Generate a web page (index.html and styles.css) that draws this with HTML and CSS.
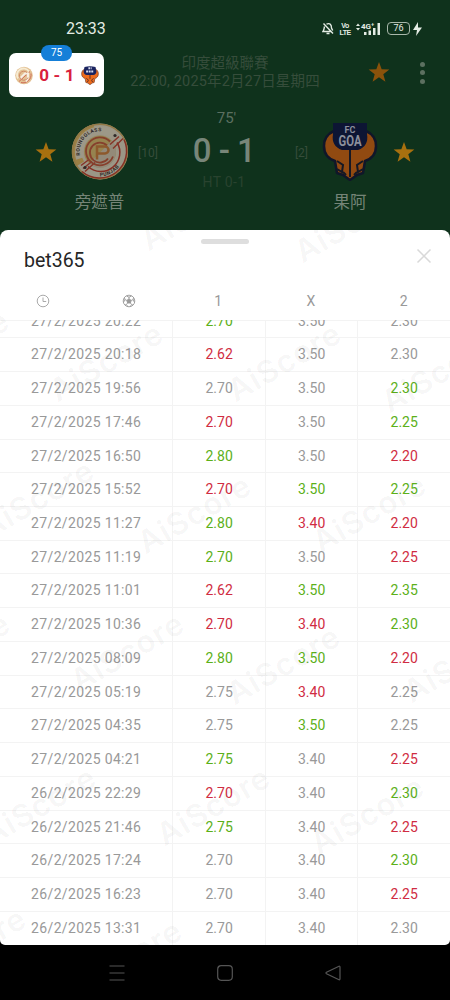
FILE: index.html
```
<!DOCTYPE html>
<html lang="zh-Hant">
<head>
    <meta charset="UTF-8">
    <meta name="viewport" content="width=device-width, initial-scale=1.0">
    <title>bet365</title>
    <link rel="stylesheet" href="styles.css">
</head>
<body>

    <svg width="0" height="0" class="defs">
        <symbol id="star" viewBox="0 0 24 24">
            <path d="M12 1l2.9 7.9 8.4.3-6.600 5.200 2.300 8.100-7-4.700-7 4.700 2.300-8.100L.7 9.200l8.400-.3z"/>
        </symbol>
        <symbol id="punjab" viewBox="0 0 58 58">
            <circle cx="29" cy="29" r="28" fill="#9b9686"/>
            <path d="M5 44A28 28 0 0 1 22 2l4 8A19 19 0 0 0 13 39z" fill="#9c8045"/>
            <path d="M9 36A21.500 21.500 0 0 1 42 12" fill="none" stroke="#9d9888" stroke-width="8"/>
            <circle cx="29" cy="29" r="27.300" fill="none" stroke="#927947" stroke-width="1.500"/>
            <path d="M53 17A27 27 0 0 1 11 49M46 20A19 19 0 0 1 17 44" fill="none" stroke="#862f24" stroke-width="1.500"/>
            <circle cx="29" cy="29" r="16" fill="#96834f"/>
            <path d="M45 29A16 16 0 0 1 18 41L41 18A16 16 0 0 1 45 29z" fill="#938a79"/>
            <path d="M52 16L42 26M48 14L39 22M24 40L14 49M21 39L12 46M18 37L10 43" stroke="#863427" stroke-width="1.500"/>
            <path d="M39 19A14 14 0 1 0 42 34M36 23A10 10 0 1 0 37 36" fill="none" stroke="#86402d" stroke-width="1.800"/>
            <path d="M26 37V24h8a3.500 3.500 0 0 1 0 7h-8" fill="none" stroke="#8d592c" stroke-width="2.500"/>
            <path id="arc-top" d="M9 33A20.500 20.500 0 0 1 41 12.500" fill="none"/>
            <path id="arc-bottom" d="M29 54A25 25 0 0 0 53 33" fill="none"/>
            <text class="crest-text"><textPath href="#arc-top">ROUNDGLASS</textPath></text>
            <text class="crest-text"><textPath href="#arc-bottom">PUNJAB</textPath></text>
            <circle cx="44" cy="13" r="1.600" fill="#302a29"/>
            <circle cx="14" cy="45" r="1.600" fill="#302a29"/>
        </symbol>
        <symbol id="goa" viewBox="0 0 54 59">
            <path d="M11 9C4 12 1 18 1 24c0 9 5 13 11 15l2 12 6 2 7 5 7-5 6-2 2-12c6-2 11-6 11-15 0-6-3-12-10-15z" fill="#914a11" stroke="#101629" stroke-width="2.500" stroke-linejoin="round"/>
            <path d="M10 1h34v11q2 12-9 16H19Q8 24 10 12z" fill="#0d1534"/>
            <path d="M27 28v27M14 39l6 4-1 7-5-3M40 39l-6 4 1 7 5-3M20 50l3 3M34 50l-3 3" fill="none" stroke="#151824" stroke-width="2"/>
            <text x="27" y="10.500" class="goa-fc">FC</text>
            <text x="27" y="24" class="goa-name" textLength="23" lengthAdjust="spacingAndGlyphs">GOA</text>
        </symbol>
    </svg>

    <div class="phone">
        <header class="header">
            <div class="status-bar">
                <span class="time">23:33</span>
                <div class="status-icons">
                    <svg width="12" height="13" viewBox="0 0 12 13" fill="none" stroke="#e4ece4" stroke-width="1.400">
                        <path d="M4.500 2.200C8 .500 9.500 3 9.500 6l1.200 2.500M2.500 4.500C2 7 2 8 1 9.500h8.500M4.500 11.500h3M1.500 1.500l9.500 10"/>
                    </svg>
                    <span class="volte"><span>Vo</span><span>LTE</span></span>
                    <svg width="25" height="14" viewBox="0 0 25 14" fill="#e4ece4">
                        <path d="M0 4l2-2.500L4 4zM0 6h4L2 8.500zM8 10h2.500v3H8zM12.500 8.500H15V13h-2.500zM17 6h2.500v7H17zM21.500 1H24v12h-2.500z"/>
                        <text x="5" y="7" class="net">4G⁺</text>
                    </svg>
                    <span class="battery">76</span>
                    <svg width="9" height="14" viewBox="0 0 9 14" fill="#e4ece4"><path d="M5 0L0 8h4l-1 6 6-8.500H5z"/></svg>
                </div>
            </div>

            <div class="title-bar">
                <div class="league">
                    <div class="league-name">印度超級聯賽</div>
                    <div class="league-date">22:00, 2025年2月27日星期四</div>
                </div>
                <svg class="star title-star"><use href="#star"/></svg>
                <div class="more"><i></i><i></i><i></i></div>
            </div>

            <div class="match">
                <svg class="star"><use href="#star"/></svg>
                <div class="team">
                    <svg class="logo"><use href="#punjab"/></svg>
                    <span class="team-name">旁遮普</span>
                </div>
                <span class="rank">[10]</span>
                <div class="score">
                    <span class="minute">75'</span>
                    <span class="goals">0 - 1</span>
                    <span class="half">HT 0-1</span>
                </div>
                <span class="rank">[2]</span>
                <div class="team">
                    <svg class="logo"><use href="#goa"/></svg>
                    <span class="team-name">果阿</span>
                </div>
                <svg class="star"><use href="#star"/></svg>
            </div>

            <!-- floating live score -->
            <div class="floating">
                <span class="floating-minute">75</span>
                <svg class="mini-logo" viewBox="0 0 18 18">
                    <circle cx="9" cy="9" r="8.800" fill="#e3c193"/>
                    <path d="M3 12a6.500 6.500 0 0 1 11-7" fill="none" stroke="#f6ead2" stroke-width="2"/>
                    <path d="M4 15L15 5M16 7A8 8 0 0 1 6 16" stroke="#d0705c" fill="none"/>
                    <path d="M5 12l5-5h3v4l-2 4" fill="none" stroke="#f7eee4" stroke-width="2"/>
                    <path d="M12 6a4.500 4.500 0 1 0 1 5" stroke="#cf8a68" fill="none"/>
                </svg>
                <span class="floating-score">0 - 1</span>
                <svg class="mini-logo" viewBox="0 0 54 59">
                    <path d="M11 9C4 12 1 18 1 24c0 9 5 13 11 15l2 12 6 2 7 5 7-5 6-2 2-12c6-2 11-6 11-15 0-6-3-12-10-15z" fill="#ef6c1c" stroke="#6f3823" stroke-width="2"/>
                    <path d="M10 3Q27-1 44 3l3 15q-1 9-10 10H17Q8 27 7 18z" fill="#1a2460"/>
                    <path d="M22 7h10M15 17h24" stroke="#dcdff0" stroke-width="6" stroke-dasharray="6 2"/>
                    <path d="M27 28v12M16 38l6 6-3 6M38 38l-6 6 3 6" fill="none" stroke="#59302b" stroke-width="3"/>
                </svg>
            </div>
        </header>

        <main class="sheet">
            <div class="handle"></div>
            <div class="sheet-title">
                <h1>bet365</h1>
                <svg width="16" height="16" viewBox="0 0 16 16" fill="none" stroke="#d9d9d9" stroke-width="1.500"><path d="M1.500 1.500l13 13M14.500 1.500l-13 13"/></svg>
            </div>
            <div class="columns">
                <span class="col-icon">
                    <svg width="14" height="14" viewBox="0 0 14 14" fill="none" stroke="#aaa"><circle cx="7" cy="7" r="5.800"/><path d="M7 3.500V7.500h3.200"/></svg>
                </span>
                <span class="col-icon">
                    <svg width="14" height="14" viewBox="0 0 14 14" fill="none" stroke="#999" stroke-width=".9"><circle cx="7" cy="7" r="5.800"/><path d="M7 4.800L9.200 6.400 8.400 9H5.600L4.800 6.400z" fill="#999"/><path d="M7 4.800V3M9.200 6.400l2-.8M8.400 9l1.300 1.600M5.600 9l-1.300 1.600M4.800 6.400l-2-.8M4.500 2L7 3.200 9.500 2M1.500 8.500l1.300-2.900L2.500 3.500M12.500 8.500l-1.300-2.900.3-2.100M3 11.200l1.300-.6L6 12.700M11 11.200l-1.300-.6L8 12.700"/></svg>
                </span>
                <span>1</span>
                <span>X</span>
                <span>2</span>
            </div>
            <div class="odds">
                <div class="odds-list" id="odds-list"></div>
            </div>
            <svg class="watermarks" id="watermarks" width="450" height="715"></svg>
        </main>

        <nav class="nav-bar">
            <svg width="16" height="16" viewBox="0 0 16 16"><path d="M.5 1h15M.5 8h15M.5 15h15"/></svg>
            <svg width="16" height="16" viewBox="0 0 16 16"><rect x=".7" y=".7" width="14.600" height="14.600" rx="3.500"/></svg>
            <svg width="16" height="16" viewBox="0 0 16 16"><path d="M14 1.200L1.500 7.300q-1 .7 0 1.400L14 14.800q1 .3 1-1V2.200q0-1.300-1-1z"/></svg>
        </nav>
    </div>

    <script>
        // "+" odds went up, "-" odds went down
        const rows = [
            ['27/2/2025 20:22', '+2.70', '3.50', '2.30'],
            ['27/2/2025 20:18', '-2.62', '3.50', '2.30'],
            ['27/2/2025 19:56', '2.70', '3.50', '+2.30'],
            ['27/2/2025 17:46', '-2.70', '3.50', '+2.25'],
            ['27/2/2025 16:50', '+2.80', '3.50', '-2.20'],
            ['27/2/2025 15:52', '-2.70', '+3.50', '+2.25'],
            ['27/2/2025 11:27', '+2.80', '-3.40', '-2.20'],
            ['27/2/2025 11:19', '+2.70', '3.50', '-2.25'],
            ['27/2/2025 11:01', '-2.62', '+3.50', '+2.35'],
            ['27/2/2025 10:36', '-2.70', '-3.40', '+2.30'],
            ['27/2/2025 08:09', '+2.80', '+3.50', '-2.20'],
            ['27/2/2025 05:19', '2.75', '-3.40', '2.25'],
            ['27/2/2025 04:35', '2.75', '+3.50', '2.25'],
            ['27/2/2025 04:21', '+2.75', '3.40', '-2.25'],
            ['26/2/2025 22:29', '-2.70', '3.40', '+2.30'],
            ['26/2/2025 21:46', '+2.75', '3.40', '-2.25'],
            ['26/2/2025 17:24', '2.70', '3.40', '+2.30'],
            ['26/2/2025 16:23', '2.70', '3.40', '-2.25'],
            ['26/2/2025 13:31', '2.70', '3.40', '2.30']
        ];

        const list = document.getElementById('odds-list');
        rows.forEach(row => {
            const line = document.createElement('div');
            line.className = 'row';
            row.forEach((value, i) => {
                const cell = document.createElement('span');
                cell.className = i === 0 ? 'date' : 'odd';
                if (value[0] === '+') cell.classList.add('up');
                if (value[0] === '-') cell.classList.add('down');
                cell.textContent = value.replace(/^[+-]/, '');
                line.appendChild(cell);
            });
            list.appendChild(line);
        });

        // centre of each watermark inside the sheet
        const marks = [
            [197, -19], [351, -7], [-48, 119], [106, 132], [284, 132], [438, 143],
            [37, 269], [194, 284], [369, 283], [-47, 422], [127, 422], [283, 435], [460, 433],
            [39, 576], [213, 576], [367, 585], [-31, 717], [125, 729]
        ];
        document.getElementById('watermarks').innerHTML = marks.map(([x, y]) =>
            `<text x="${x}" y="${y}" dy="11" textLength="124" transform="rotate(-30 ${x} ${y})">AiScore</text>`
        ).join('');
    </script>

</body>
</html>
```
FILE: styles.css
```
body {
    margin: 0;
    background-color: #000;
    font-family: Roboto, "Noto Sans CJK TC", sans-serif;
}

.defs {
    display: block;
}

.phone {
    width: 450px;
    height: 1000px;
    display: flex;
    flex-direction: column;
    overflow: hidden;
    background-color: #000;
}

.header {
    position: relative;
    height: 240px;
    margin-bottom: -10px;
    flex: none;
    background-color: #0f321c;
    color: #5b6f60;
}

/* status bar */
.status-bar {
    height: 54px;
    padding: 3px 28px 0 66px;
    display: flex;
    align-items: center;
    justify-content: space-between;
    box-sizing: border-box;
    color: #e4ece4;
}

.time {
    font-size: 16px;
}

.status-icons {
    display: flex;
    align-items: center;
    gap: 6px;
}

.volte {
    display: flex;
    flex-direction: column;
    align-items: center;
    width: 10px;
    font-family: "Liberation Sans", sans-serif;
    font-size: 7px;
    line-height: 7px;
    font-weight: bold;
    letter-spacing: -0.5px;
}

.net {
    font-size: 8px;
    font-weight: bold;
}

.battery {
    width: 23px;
    height: 13px;
    margin-right: -3px;
    box-sizing: border-box;
    border: 1.5px solid #a9b8ab;
    border-radius: 4px;
    font-size: 9px;
    line-height: 11px;
    text-align: center;
}

/* league and date */
.title-bar {
    height: 54px;
    display: grid;
    grid-template-columns: 125px 200px 43px 22px 60px;
}

.league {
    grid-column: 2;
    padding-top: 1px;
    text-align: center;
    color: #364d3b;
    white-space: nowrap;
}

.league-name {
    font-size: 14.5px;
    line-height: 18px;
}

.league-date {
    font-size: 14.5px;
    line-height: 17px;
    letter-spacing: 0.15px;
}

.star {
    width: 22px;
    height: 22px;
    fill: #a8700f;
}

.title-star {
    grid-column: 4;
    margin-top: 7px;
    fill: #8a520b;
}

.more {
    display: flex;
    flex-direction: column;
    align-items: center;
    gap: 3.5px;
    padding: 7.5px 0 0 4px;
}

.more i {
    width: 5px;
    height: 5px;
    border-radius: 50%;
    background-color: #5c7060;
}

/* teams and score */
.match {
    display: grid;
    grid-template-columns: 71px 57px 40px 112px 43px 54px 54px;
    justify-items: center;
}

.match > .star {
    margin-top: 33px;
}

.match > .star:first-child {
    margin-left: 20px;
}

.team {
    display: flex;
    flex-direction: column;
    align-items: center;
    padding-top: 14px;
}

.logo {
    width: 58px;
    height: 59px;
}

.team-name {
    margin-top: 10px;
    font-size: 16.5px;
    line-height: 24px;
    color: #758477;
    white-space: nowrap;
}

.rank {
    margin-top: 37px;
    font-size: 12px;
    line-height: 16px;
    color: #364d3b;
}

.score {
    display: flex;
    flex-direction: column;
    align-items: center;
    white-space: nowrap;
}

.minute {
    font-size: 15px;
    line-height: 20px;
    margin-left: 5px;
}

.goals {
    font-size: 33px;
    line-height: 45px;
    font-weight: 500;
    letter-spacing: -0.5px;
    color: #788679;
}

.half {
    font-size: 14px;
    line-height: 19px;
    letter-spacing: 0.3px;
    color: #29432f;
}

.crest-text {
    font-size: 5px;
    font-weight: bold;
    letter-spacing: 0.5px;
    fill: #302a29;
}

.goa-fc, .goa-name {
    font-weight: bold;
    text-anchor: middle;
    fill: #8b8f9c;
}

.goa-fc {
    font-size: 9px;
}

.goa-name {
    font-size: 15px;
}

/* floating card */
.floating {
    position: absolute;
    left: 9px;
    top: 53px;
    width: 95px;
    height: 44px;
    padding: 0 5px 0 6px;
    box-sizing: border-box;
    display: flex;
    align-items: center;
    justify-content: space-between;
    background-color: #fff;
    border-radius: 7px;
}

.floating-minute {
    position: absolute;
    left: 32px;
    top: -8px;
    width: 31px;
    height: 16px;
    border-radius: 8px;
    background-color: #157fd8;
    color: #fff;
    font-size: 10px;
    line-height: 16px;
    text-align: center;
}

.floating-score {
    font-size: 17px;
    font-weight: bold;
    letter-spacing: 0.2px;
    color: #d9203c;
}

.mini-logo {
    width: 18px;
    height: 19px;
}

/* bottom sheet */
.sheet {
    position: relative;
    height: 715px;
    flex: none;
    display: flex;
    flex-direction: column;
    overflow: hidden;
    background-color: #fff;
    border-radius: 8px 8px 5px 5px;
}

.handle {
    width: 48px;
    height: 5px;
    margin: 9px auto 0;
    border-radius: 3px;
    background-color: #dedede;
}

.sheet-title {
    height: 38px;
    padding: 0 18px 0 24px;
    display: flex;
    align-items: center;
    justify-content: space-between;
}

.sheet-title svg {
    margin-top: -14px;
}

h1 {
    margin: -6px 0 0;
    font-size: 19.5px;
    font-weight: normal;
    color: #262626;
}

.columns {
    height: 38px;
    flex: none;
    display: grid;
    grid-template-columns: 86px 86px 92.5px 93px 92.5px;
    align-items: center;
    text-align: center;
    font-size: 14px;
    color: #999;
}

.col-icon {
    display: flex;
    justify-content: center;
}

.odds {
    flex: 1;
    overflow: hidden;
    box-shadow: inset 0 1px 0 #f3f3f3;
}

.odds-list {
    margin-top: -15.4px;
}

.row {
    height: 33.74px;
    box-sizing: border-box;
    display: grid;
    grid-template-columns: 172.4px 92.5px 92.5px 92.6px;
    border-bottom: 1px solid #f3f3f3;
    font-size: 14px;
    line-height: 33px;
    text-align: center;
    color: #999;
}

.date {
    letter-spacing: 0.35px;
}

.odd {
    border-left: 1px solid #f3f3f3;
}

.up {
    color: #5cb019;
}

.down {
    color: #d02c42;
}

.watermarks {
    position: absolute;
    left: 0;
    top: 0;
    pointer-events: none;
    font-family: Inter, sans-serif;
    font-size: 31px;
    font-weight: 600;
    text-anchor: middle;
    fill: rgba(0, 0, 0, 0.045);
}

/* android buttons */
.nav-bar {
    flex: 1;
    display: flex;
    justify-content: center;
    align-items: center;
    gap: 92px;
    fill: none;
    stroke: #555;
    stroke-width: 1.2;
}
```
